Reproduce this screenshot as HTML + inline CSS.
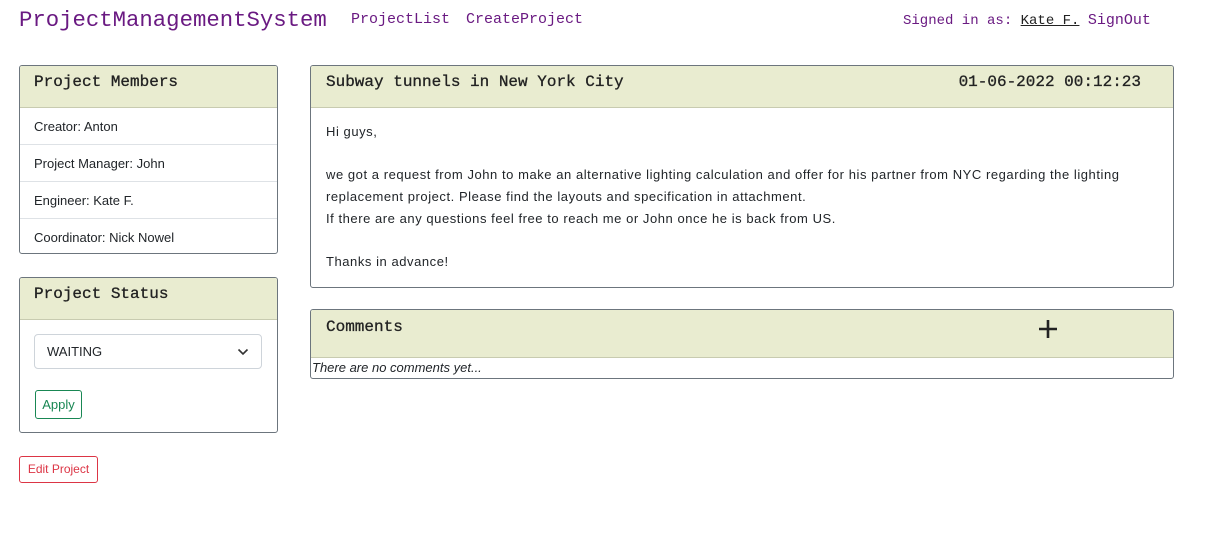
<!DOCTYPE html>
<html><head><style>
*{box-sizing:border-box;margin:0;padding:0}
body{width:1224px;height:537px;background:#fff;font-family:"Liberation Sans",sans-serif;font-size:13px;color:#212529;position:relative;overflow:hidden}
.mono{font-family:"Liberation Mono",monospace}
.abs{position:absolute}
.card{position:absolute;border:1px solid #6c757d;border-radius:3px;background:#fff;overflow:hidden}
.hd{background:#e9ecd0;border-bottom:1px solid #c8cbb0;font-family:"Liberation Mono",monospace;font-size:16px;color:#222;padding:0 14px;position:relative;-webkit-text-stroke:0.3px #222;letter-spacing:0}
.row{height:37px;line-height:37px;padding-left:14px;border-bottom:1px solid #dee2e6}
</style></head><body>
<div class="abs mono" style="left:19px;top:7px;font-size:22.3px;color:#6a1a82">ProjectManagementSystem</div>
<div class="abs mono" style="left:351px;top:11px;font-size:15px;color:#6a1a82">ProjectList</div>
<div class="abs mono" style="left:466px;top:11px;font-size:15px;color:#6a1a82">CreateProject</div>
<div class="abs mono" style="left:903px;top:12px;font-size:14px;color:#6a1a82">Signed in as: <span style="color:#222;text-decoration:underline">Kate F.</span> <span style="font-size:15px">SignOut</span></div>

<div class="card" style="left:19px;top:65px;width:259px;height:189px">
<div class="hd" style="height:42px;line-height:32px">Project Members</div>
<div class="row">Creator: Anton</div>
<div class="row">Project Manager: John</div>
<div class="row">Engineer: Kate F.</div>
<div class="row" style="border:none">Coordinator: Nick Nowel</div>
</div>

<div class="card" style="left:19px;top:277px;width:259px;height:156px">
<div class="hd" style="height:42px;line-height:32px">Project Status</div>
<div class="abs" style="left:14px;top:56px;width:228px;height:35px;border:1px solid #ced4da;border-radius:4px;padding-left:12px;line-height:33px;font-size:13px">WAITING
<svg class="abs" style="right:12px;top:13px" width="12" height="8" viewBox="0 0 12 8"><path d="M1.5 1.5l4.5 4.5 4.5-4.5" fill="none" stroke="#333" stroke-width="1.6"/></svg></div>
<div class="abs" style="left:15px;top:112px;width:47px;height:29px;border:1px solid #198754;border-radius:3px;color:#198754;line-height:27px;text-align:center;font-size:13px">Apply</div>
</div>

<div class="abs" style="left:19px;top:456px;width:79px;height:27px;border:1px solid #dc3545;border-radius:3px;color:#dc3545;line-height:25px;text-align:center;font-size:12px">Edit Project</div>

<div class="card" style="left:310px;top:65px;width:864px;height:223px">
<div class="hd" style="height:42px;line-height:32px;padding-left:15px">Subway tunnels in New York City<span class="abs" style="right:32px;top:0">01-06-2022 00:12:23</span></div>
<div style="padding:13px 20px 13px 15px;line-height:21.7px;letter-spacing:0.55px">Hi guys,<br><br>we got a request from John to make an alternative lighting calculation and offer for his partner from NYC regarding the lighting<br>replacement project. Please find the layouts and specification in attachment.<br>If there are any questions feel free to reach me or John once he is back from US.<br><br>Thanks in advance!</div>
</div>

<div class="card" style="left:310px;top:309px;width:864px;height:70px">
<div class="hd" style="height:48px;line-height:34px;padding-left:15px">Comments
<svg class="abs" style="left:727px;top:9px" width="20" height="20" viewBox="0 0 20 20"><path d="M10 1v18M1 10h18" stroke="#222" stroke-width="2.6"/></svg></div>
<div style="font-style:italic;padding-left:1px;line-height:20px">There are no comments yet...</div>
</div>
</body></html>
